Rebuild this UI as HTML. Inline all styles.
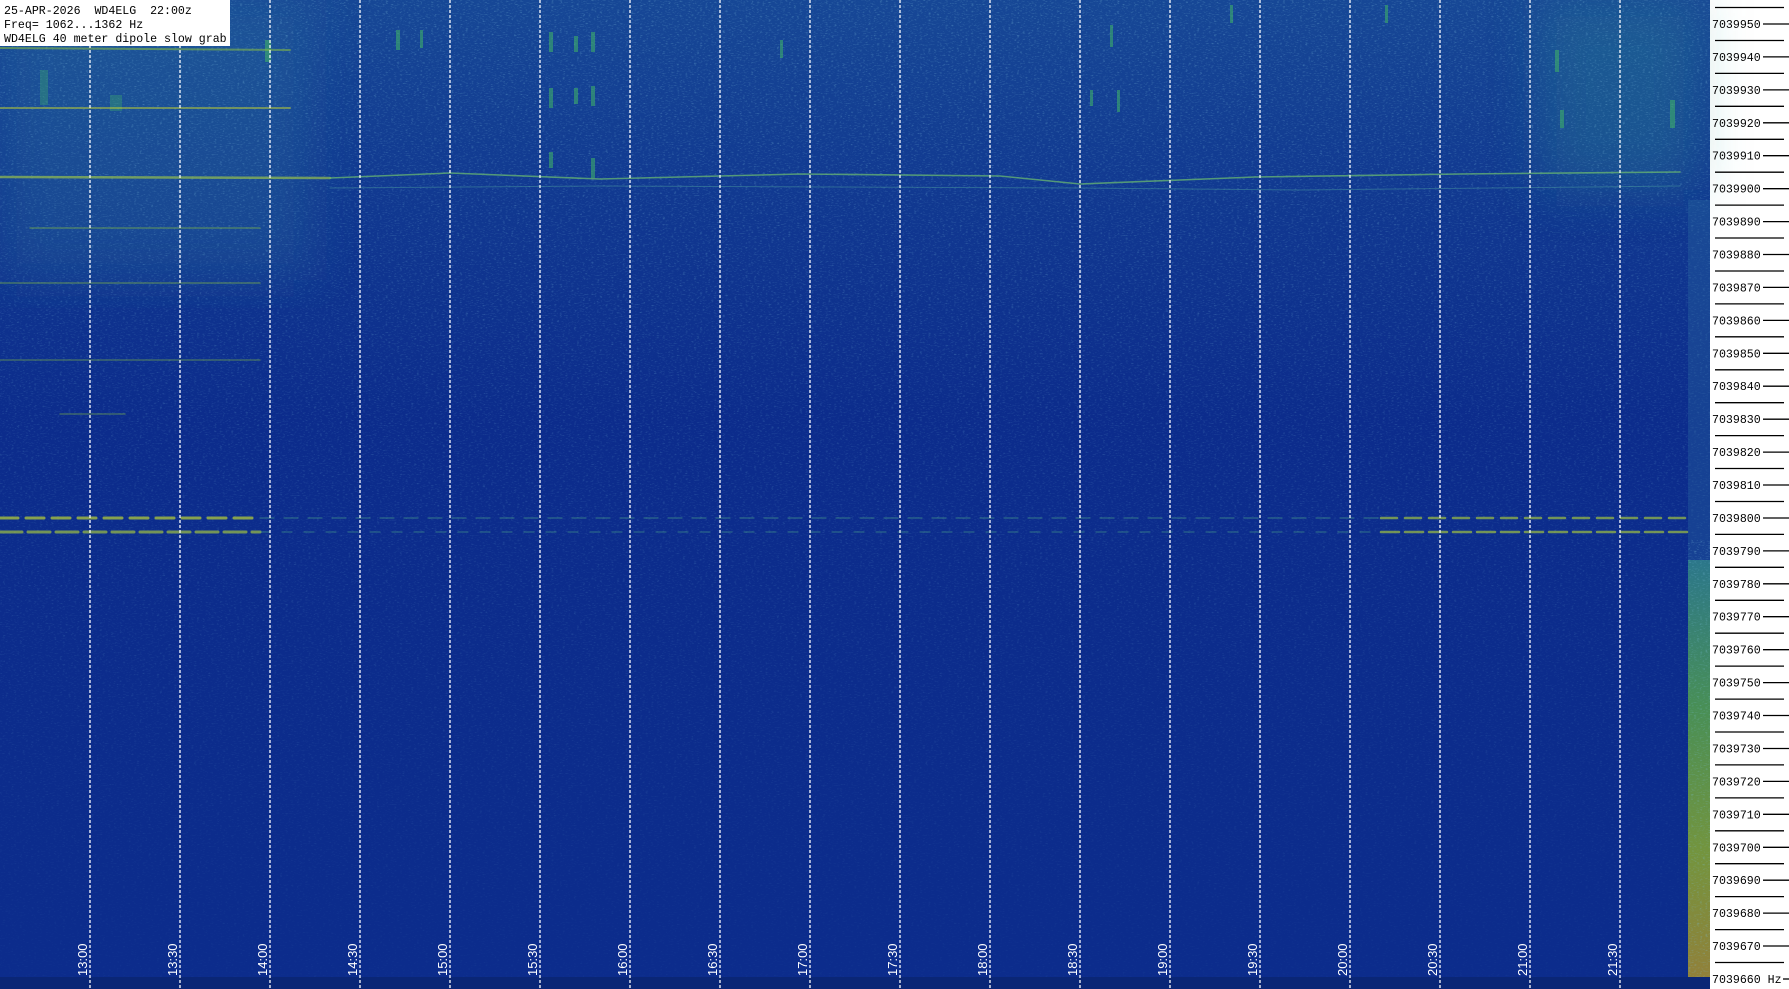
<!DOCTYPE html>
<html><head><meta charset="utf-8"><style>
html,body{margin:0;padding:0;background:#fff;width:1789px;height:989px;overflow:hidden}
svg{display:block}
text{white-space:pre}
</style></head><body>
<svg width="1789" height="989" viewBox="0 0 1789 989" xmlns="http://www.w3.org/2000/svg">
<defs>
<filter id="nz" x="0" y="0" width="100%" height="100%">
<feTurbulence type="fractalNoise" baseFrequency="0.35 0.9" numOctaves="2" seed="4"/>
<feColorMatrix type="matrix" values="0 0 0 0 0.2  0 0 0 0 0.5  0 0 0 0 0.7  0 0 0 2.2 -1.2"/>
</filter>
<filter id="bl"><feGaussianBlur stdDeviation="25"/></filter>
<linearGradient id="topg" x1="0" y1="0" x2="0" y2="1">
<stop offset="0" stop-color="#2a7aa8" stop-opacity="0.35"/>
<stop offset="0.5" stop-color="#2a7aa8" stop-opacity="0.15"/>
<stop offset="1" stop-color="#2a7aa8" stop-opacity="0"/>
</linearGradient>
<linearGradient id="fade" x1="0" y1="0" x2="0" y2="1">
<stop offset="0" stop-color="#fff" stop-opacity="1"/>
<stop offset="0.45" stop-color="#fff" stop-opacity="0.6"/>
<stop offset="1" stop-color="#fff" stop-opacity="0.15"/>
</linearGradient>
<mask id="mk"><rect x="0" y="0" width="1710" height="989" fill="url(#fade)"/></mask>
<linearGradient id="strip" x1="0" y1="0" x2="0" y2="1">
<stop offset="0" stop-color="#2f7f8a"/>
<stop offset="0.35" stop-color="#4f9a50"/>
<stop offset="0.7" stop-color="#7fa035"/>
<stop offset="1" stop-color="#a08a30"/>
</linearGradient>
</defs>
<rect x="0" y="0" width="1710" height="989" fill="#0c2c8c"/>
<rect x="0" y="0" width="1710" height="420" fill="url(#topg)"/>
<g filter="url(#bl)">
<rect x="0" y="0" width="310" height="280" fill="#2f8aa0" opacity="0.22"/>
<rect x="1540" y="0" width="160" height="190" fill="#2f9a90" opacity="0.25"/>
</g>
<rect x="0" y="0" width="1710" height="989" filter="url(#nz)" opacity="0.55" mask="url(#mk)"/>
<!-- vertical bursts -->
<g fill="#3fae6a" opacity="0.6">
<rect x="396" y="30" width="4" height="20"/><rect x="420" y="30" width="3" height="18"/>
<rect x="549" y="32" width="4" height="20"/><rect x="574" y="36" width="4" height="16"/><rect x="591" y="32" width="4" height="20"/>
<rect x="549" y="88" width="4" height="20"/><rect x="574" y="88" width="4" height="16"/><rect x="591" y="86" width="4" height="20"/>
<rect x="549" y="152" width="4" height="16"/><rect x="591" y="158" width="4" height="20"/>
<rect x="780" y="40" width="3" height="18"/><rect x="1110" y="25" width="3" height="22"/>
<rect x="1090" y="90" width="3" height="16"/><rect x="1117" y="90" width="3" height="22"/>
<rect x="1230" y="5" width="3" height="18"/><rect x="1385" y="5" width="3" height="18"/><rect x="1555" y="50" width="4" height="22"/>
<rect x="1560" y="110" width="4" height="18"/><rect x="1670" y="100" width="5" height="28"/>
<rect x="40" y="70" width="8" height="35" opacity="0.6"/><rect x="110" y="95" width="12" height="16" opacity="0.6"/><rect x="265" y="40" width="6" height="22"/>
</g>
<!-- horizontal traces -->
<g stroke-linecap="round">
<line x1="0" y1="48" x2="290" y2="50" stroke="#8ac040" stroke-width="2" opacity="0.55"/>
<line x1="0" y1="108" x2="290" y2="108" stroke="#b8c838" stroke-width="2" opacity="0.55"/>
<line x1="0" y1="177" x2="330" y2="178" stroke="#a0c848" stroke-width="2.5" opacity="0.65"/>
<polyline points="330,178 450,173 600,179 800,174 1000,176 1080,184 1255,177 1460,174 1680,172" fill="none" stroke="#6ab870" stroke-width="1.6" opacity="0.75"/>
<polyline points="330,188 600,186 1080,188 1300,190 1680,186" fill="none" stroke="#4a9aa0" stroke-width="1" opacity="0.5"/>
<line x1="30" y1="228" x2="260" y2="228" stroke="#8ac040" stroke-width="1.5" opacity="0.45"/>
<line x1="0" y1="283" x2="260" y2="283" stroke="#8ac040" stroke-width="1.5" opacity="0.45"/>
<line x1="0" y1="360" x2="260" y2="360" stroke="#8ac040" stroke-width="1.5" opacity="0.4"/>
<line x1="60" y1="414" x2="125" y2="414" stroke="#8ac040" stroke-width="1.5" opacity="0.4"/>
<line x1="0" y1="518" x2="260" y2="518" stroke="#b0c838" stroke-width="3" stroke-dasharray="18,8" opacity="0.75"/>
<line x1="0" y1="532" x2="260" y2="532" stroke="#a0c040" stroke-width="3" stroke-dasharray="22,6" opacity="0.7"/>
<line x1="260" y1="518" x2="1381" y2="518" stroke="#4fa88a" stroke-width="1.2" stroke-dasharray="14,10" opacity="0.5"/>
<line x1="260" y1="532" x2="1381" y2="532" stroke="#4fa88a" stroke-width="1.2" stroke-dasharray="10,12" opacity="0.45"/>
<line x1="1381" y1="518" x2="1690" y2="518" stroke="#a0c040" stroke-width="2.5" stroke-dasharray="16,8" opacity="0.7"/>
<line x1="1381" y1="532" x2="1690" y2="532" stroke="#a0c040" stroke-width="2.5" stroke-dasharray="18,6" opacity="0.7"/>
</g>
<rect x="1688" y="200" width="22" height="360" fill="#2a6aa0" opacity="0.35"/>
<rect x="1688" y="560" width="22" height="418" fill="url(#strip)" opacity="0.9"/>
<rect x="1688" y="540" width="22" height="438" filter="url(#nz)" opacity="0.5"/>
<rect x="0" y="977" width="1710" height="12" fill="#0a2676"/>
<!-- time grid -->
<g stroke="#fff" stroke-width="1.3" stroke-dasharray="3,2">
<line x1="90" y1="0" x2="90" y2="989"/><line x1="180" y1="0" x2="180" y2="989"/><line x1="270" y1="0" x2="270" y2="989"/><line x1="360" y1="0" x2="360" y2="989"/><line x1="450" y1="0" x2="450" y2="989"/><line x1="540" y1="0" x2="540" y2="989"/><line x1="630" y1="0" x2="630" y2="989"/><line x1="720" y1="0" x2="720" y2="989"/><line x1="810" y1="0" x2="810" y2="989"/><line x1="900" y1="0" x2="900" y2="989"/><line x1="990" y1="0" x2="990" y2="989"/><line x1="1080" y1="0" x2="1080" y2="989"/><line x1="1170" y1="0" x2="1170" y2="989"/><line x1="1260" y1="0" x2="1260" y2="989"/><line x1="1350" y1="0" x2="1350" y2="989"/><line x1="1440" y1="0" x2="1440" y2="989"/><line x1="1530" y1="0" x2="1530" y2="989"/><line x1="1620" y1="0" x2="1620" y2="989"/>
</g>
<g fill="#fff" font-family="Liberation Sans, sans-serif" font-size="13">
<text transform="translate(87,976) rotate(-90)">13:00</text>
<text transform="translate(177,976) rotate(-90)">13:30</text>
<text transform="translate(267,976) rotate(-90)">14:00</text>
<text transform="translate(357,976) rotate(-90)">14:30</text>
<text transform="translate(447,976) rotate(-90)">15:00</text>
<text transform="translate(537,976) rotate(-90)">15:30</text>
<text transform="translate(627,976) rotate(-90)">16:00</text>
<text transform="translate(717,976) rotate(-90)">16:30</text>
<text transform="translate(807,976) rotate(-90)">17:00</text>
<text transform="translate(897,976) rotate(-90)">17:30</text>
<text transform="translate(987,976) rotate(-90)">18:00</text>
<text transform="translate(1077,976) rotate(-90)">18:30</text>
<text transform="translate(1167,976) rotate(-90)">19:00</text>
<text transform="translate(1257,976) rotate(-90)">19:30</text>
<text transform="translate(1347,976) rotate(-90)">20:00</text>
<text transform="translate(1437,976) rotate(-90)">20:30</text>
<text transform="translate(1527,976) rotate(-90)">21:00</text>
<text transform="translate(1617,976) rotate(-90)">21:30</text>
</g>
<!-- info box -->
<rect x="0" y="0" width="230" height="46" fill="#fff"/>
<g font-family="Liberation Mono, monospace" font-size="11.6" fill="#000">
<text x="4" y="14" xml:space="preserve">25-APR-2026  WD4ELG  22:00z</text>
<text x="4" y="28">Freq= 1062...1362 Hz</text>
<text x="4" y="42">WD4ELG 40 meter dipole slow grab</text>
</g>
<!-- frequency axis -->
<g id="ax" stroke="#000" stroke-width="1.3">
<line x1="1715" y1="7.5" x2="1784" y2="7.5"/>
</g>
<script>
(function(){
var ns="http://www.w3.org/2000/svg",svg=document.querySelector('svg'),ax=document.getElementById('ax');
for(var k=0;k<30;k++){
 var y=24+k*32.93,f=7039950-k*10;
 var t=document.createElementNS(ns,'text');
 t.setAttribute('x',1712);t.setAttribute('y',(y+4).toFixed(1));
 t.setAttribute('font-family','Liberation Mono, monospace');t.setAttribute('font-size','11.6');
 t.textContent=f+(k==29?" Hz":"");svg.appendChild(t);
 var l=document.createElementNS(ns,'line');
 l.setAttribute('x1',k==29?1783:1763);l.setAttribute('x2',1789);
 l.setAttribute('y1',y.toFixed(1));l.setAttribute('y2',y.toFixed(1));ax.appendChild(l);
 if(k<29){var m=document.createElementNS(ns,'line');var ym=(y+16.46).toFixed(1);
 m.setAttribute('x1',1715);m.setAttribute('x2',1784);m.setAttribute('y1',ym);m.setAttribute('y2',ym);ax.appendChild(m);}
}
})();
</script>
</svg>
</body></html>
